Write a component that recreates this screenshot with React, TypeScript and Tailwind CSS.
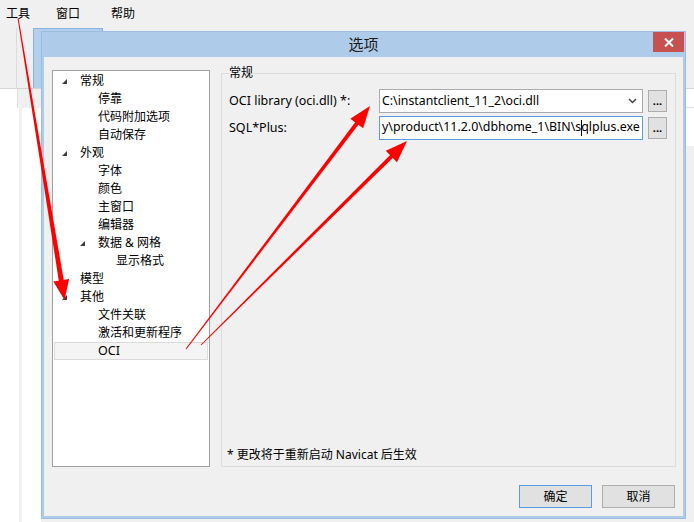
import React from "react";

const FONT = '"Noto Sans", "Noto Sans CJK SC", sans-serif';

type Node = { label: string; level: number; expander?: boolean; selected?: boolean };

const tree: Node[] = [
  { label: "常规", level: 0, expander: true },
  { label: "停靠", level: 1 },
  { label: "代码附加选项", level: 1 },
  { label: "自动保存", level: 1 },
  { label: "外观", level: 0, expander: true },
  { label: "字体", level: 1 },
  { label: "颜色", level: 1 },
  { label: "主窗口", level: 1 },
  { label: "编辑器", level: 1 },
  { label: "数据 & 网格", level: 1, expander: true },
  { label: "显示格式", level: 2 },
  { label: "模型", level: 0 },
  { label: "其他", level: 0, expander: true },
  { label: "文件关联", level: 1 },
  { label: "激活和更新程序", level: 1 },
  { label: "OCI", level: 1, selected: true },
];

const indentClass = ["pl-[26px]", "pl-[44px]", "pl-[62px]"];
const expClass = ["left-[8px]", "left-[26px]", "left-[44px]"];

function Expander() {
  return (
    <svg width="5" height="5" viewBox="0 0 5 5" className="block">
      <polygon points="5,0 5,5 0,5" fill="#3c3c3c" />
    </svg>
  );
}

function Arrow({
  sx,
  sy,
  tx,
  ty,
  w0,
  w1,
  head,
  hw,
}: {
  sx: number;
  sy: number;
  tx: number;
  ty: number;
  w0: number;
  w1: number;
  head: number;
  hw: number;
}) {
  const dx = tx - sx;
  const dy = ty - sy;
  const len = Math.hypot(dx, dy);
  const ux = dx / len;
  const uy = dy / len;
  const px = -uy;
  const py = ux;
  const bx = tx - ux * head;
  const by = ty - uy * head;
  const ex = bx + ux * 2;
  const ey = by + uy * 2;
  const shaft = [
    [sx + (px * w0) / 2, sy + (py * w0) / 2],
    [ex + (px * w1) / 2, ey + (py * w1) / 2],
    [ex - (px * w1) / 2, ey - (py * w1) / 2],
    [sx - (px * w0) / 2, sy - (py * w0) / 2],
  ]
    .map((p) => p.join(","))
    .join(" ");
  const hd = [
    [tx, ty],
    [bx + px * hw, by + py * hw],
    [bx - px * hw, by - py * hw],
  ]
    .map((p) => p.join(","))
    .join(" ");
  return (
    <g fill="#ff0000">
      <polygon points={shaft} />
      <polygon points={hd} />
    </g>
  );
}

export default function App() {
  return (
    <div
      className="relative w-[694px] h-[522px] overflow-hidden bg-[#f0f0f0] text-[12px] text-black flex flex-col"
      style={{ fontFamily: FONT }}
    >
      {/* background app menu bar */}
      <div className="flex h-[28px] items-center pl-[6px] shrink-0">
        <span className="leading-none">工具</span>
        <span className="leading-none ml-[26px]">窗口</span>
        <span className="leading-none ml-[31px]">帮助</span>
      </div>
      {/* background toolbar area */}
      <div className="flex h-[60px] shrink-0">
        <div className="w-[17px] border-r border-[#dcdcdc]" />
        <div className="ml-[16px] w-[70px] bg-[#b4cfeb] border border-[#88b4e4] border-b-0" />
      </div>
      <div className="h-px bg-[#d4d4d4] shrink-0" />
      <div className="flex h-[19px] shrink-0">
        <div className="w-[18px] bg-white border-r border-[#e0e0e0]" />
        <div className="flex-1" />
        <div className="w-[8px] bg-white border-b border-[#e0e0e0]" />
      </div>
      <div className="flex flex-1">
        <div className="w-[19px] bg-white" />
        <div className="w-[3px] bg-[#f0f0f0]" />
        <div className="w-[19px] bg-white" />
        <div className="flex-1" />
        <div className="w-[8px] flex flex-col">
          <div className="h-[38px] bg-white" />
        </div>
      </div>

      {/* dialog window */}
      <div className="absolute left-[41px] top-[31px] w-[645px] h-[488px] bg-[#aecbe9] border border-[#9dbde0] flex flex-col">
        <div className="relative h-[25px] shrink-0 flex items-center justify-center">
          <span className="text-[15px] leading-none text-[#1a1a1a]">选项</span>
          <div className="absolute right-[1px] top-0 w-[31px] h-[20px] bg-[#c75050] flex items-center justify-center">
            <svg width="10" height="9" viewBox="0 0 10 9">
              <path d="M1 0.5 L9 8.5 M9 0.5 L1 8.5" stroke="#ffffff" strokeWidth="2" />
            </svg>
          </div>
        </div>
        <div className="flex-1 mx-[2px] mb-[2px] bg-[#f0f0f0] flex flex-col pt-[13px] pl-[8px] pr-[7px]">
          <div className="flex gap-[11px]">
            {/* tree */}
            <div className="w-[158px] h-[397px] bg-white border border-[#a0a0a0] pt-px px-px">
              {tree.map((n, i) => (
                <div
                  key={i}
                  className={`relative h-[18px] flex items-center ${indentClass[n.level]} ${
                    n.selected ? "bg-[#f4f4f4] border border-[#dadada]" : ""
                  }`}
                >
                  {n.expander && (
                    <span className={`absolute top-[7px] ${expClass[n.level]}`}>
                      <Expander />
                    </span>
                  )}
                  <span className={`leading-none ${n.selected ? "-ml-px text-[12.5px]" : ""}`}>{n.label}</span>
                </div>
              ))}
            </div>
            {/* group box */}
            <fieldset className="flex-1 h-[400px] -mt-[3px] border border-[#dcdcdc] flex flex-col px-[7px] pb-[5px]">
              <legend className="leading-none text-[12px]">常规</legend>
              <div className="flex flex-col gap-[3px] mt-[10px]">
                <div className="flex items-center h-[24px]">
                  <span className="w-[150px] leading-none text-[12.5px]">OCI library (oci.dll) *:</span>
                  <div className="w-[264px] h-[24px] bg-white border border-[#ababab] flex items-center pl-[2px] pr-[5px]">
                    <span className="flex-1 leading-none text-[12.3px]">C:\instantclient_11_2\oci.dll</span>
                    <svg width="9" height="6" viewBox="0 0 9 6">
                      <path d="M1 1 L4.5 4.5 L8 1" stroke="#444444" strokeWidth="1.5" fill="none" />
                    </svg>
                  </div>
                  <div className="ml-[5px] w-[19px] h-[22px] bg-[#e1e1e1] border border-[#adadad] flex items-center justify-center leading-none text-[11px] font-bold pb-[2px]">
                    ...
                  </div>
                </div>
                <div className="flex items-center h-[24px]">
                  <span className="w-[150px] leading-none text-[12.5px]">SQL*Plus:</span>
                  <div className="w-[264px] h-[24px] bg-white border border-[#569de5] flex items-center pl-[2px] overflow-hidden whitespace-nowrap">
                    <span className="leading-none text-[12.4px]">
                      y\product\11.2.0\dbhome_1\BIN\s
                      <span className="inline-block w-px h-[16px] bg-black align-middle -mr-px" />
                      qlplus.exe
                    </span>
                  </div>
                  <div className="ml-[5px] w-[19px] h-[22px] bg-[#e1e1e1] border border-[#adadad] flex items-center justify-center leading-none text-[11px] font-bold pb-[2px]">
                    ...
                  </div>
                </div>
              </div>
              <div className="flex-1" />
              <div className="-ml-[2px] leading-none">* 更改将于重新启动 Navicat 后生效</div>
            </fieldset>
          </div>
          <div className="flex justify-end gap-[10px] mt-[18px] pr-px">
            <div className="w-[73px] h-[23px] bg-[#e1e1e1] border border-[#569de5] flex items-center justify-center leading-none">
              确定
            </div>
            <div className="w-[73px] h-[23px] bg-[#e1e1e1] border border-[#adadad] flex items-center justify-center leading-none">
              取消
            </div>
          </div>
        </div>
      </div>

      {/* red annotation arrows */}
      <svg className="absolute inset-0 pointer-events-none" width="694" height="522" viewBox="0 0 694 522">
        <Arrow sx={18} sy={18} tx={64.5} ty={300} w0={1} w1={5} head={20} hw={8} />
        <Arrow sx={186} sy={349} tx={370} ty={106} w0={1} w1={4} head={22} hw={8} />
        <Arrow sx={201} sy={345} tx={407} ty={141} w0={1} w1={4} head={22} hw={8} />
      </svg>
    </div>
  );
}
